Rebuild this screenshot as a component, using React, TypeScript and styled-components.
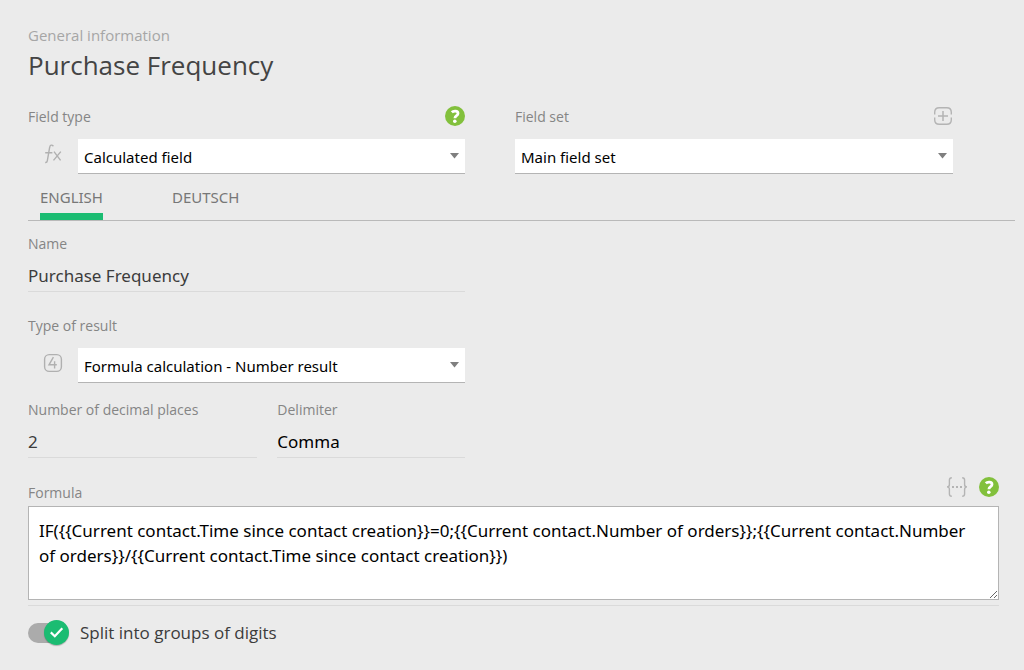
import React from "react";
import styled, { createGlobalStyle } from "styled-components";

const GlobalStyle = createGlobalStyle`
  *, *::before, *::after { box-sizing: border-box; }
  body {
    margin: 0;
    background: #ebebeb;
    color: #3c3c3c;
    font-family: "Segoe UI", "Open Sans", sans-serif;
  }
  button, input, select, textarea {
    font-family: "Segoe UI", "Noto Sans", sans-serif;
  }
`;

const Page = styled.main`
  padding: 23px 9px 22px 28px;
`;

const Eyebrow = styled.p`
  margin: 0;
  color: #a6a6a6;
  font-size: 15px;
  line-height: 24px;
`;

const Title = styled.h1`
  margin: 0 0 22px;
  color: #444;
  font-size: 26px;
  font-weight: 400;
  line-height: 36px;
`;

const Columns = styled.div`
  display: grid;
  grid-template-columns: 437fr 438fr;
  column-gap: 50px;
  padding-right: 62px;
`;

const SplitRow = styled.div`
  display: grid;
  grid-template-columns: 11fr 9fr;
  column-gap: 20px;
`;

const Field = styled.div<{ $gap?: number }>`
  margin-bottom: ${({ $gap = 0 }) => $gap}px;
`;

const FieldHead = styled.div`
  display: flex;
  align-items: flex-start;
  justify-content: space-between;
  height: 24px;
`;

const Label = styled.label`
  color: #858585;
  font-size: 14px;
  line-height: 24px;
`;

const HeadActions = styled.div`
  display: flex;
  gap: 11px;
`;

const IconButton = styled.button`
  display: flex;
  padding: 1px 0 0;
  border: 0;
  background: none;
  color: #b4b4b4;
  cursor: pointer;
`;

const SelectRow = styled.div`
  display: flex;
  margin-top: 10px;
`;

const TypeIcon = styled.span`
  display: flex;
  flex: none;
  justify-content: center;
  width: 50px;
  padding-top: 5px;
  color: #b0b0b0;
`;

const SelectBox = styled.div`
  position: relative;
  flex: 1;
  min-width: 0;
`;

const Select = styled.select`
  display: block;
  width: 100%;
  height: 35px;
  padding: 2px 28px 0 6px;
  border: 0;
  border-bottom: 1px solid #b4b4b4;
  border-radius: 0;
  background: #fff;
  color: #000;
  font-size: 15px;
  appearance: none;
`;

const Arrow = styled.svg`
  position: absolute;
  top: 14px;
  right: 6px;
  pointer-events: none;
`;

const Tabs = styled.div`
  display: flex;
  gap: 69px;
  height: 47px;
  margin-bottom: 11px;
  padding: 11px 12px 0;
  border-bottom: 1px solid #b9b9b9;
`;

const Tab = styled.button<{ $active?: boolean }>`
  padding: 0 0 4px;
  border: 0;
  border-bottom: 7px solid ${({ $active }) => ($active ? "#1bbc72" : "transparent")};
  background: none;
  color: #777;
  font-size: 15px;
  line-height: 24px;
  cursor: pointer;
`;

const LineInput = styled.input`
  display: block;
  width: 100%;
  height: 36px;
  padding: 4px 0 0;
  border: 0;
  border-bottom: 1px solid #dadada;
  background: none;
  color: #3c3c3c;
  font-size: 17px;
`;

const LineSelect = styled.select`
  display: block;
  width: 100%;
  height: 36px;
  padding: 4px 0 0;
  border: 0;
  border-bottom: 1px solid #dadada;
  border-radius: 0;
  background: none;
  color: #000;
  font-size: 17px;
  appearance: none;
`;

const FormulaField = styled.div`
  margin-right: 16px;
  padding-bottom: 5px;
  border-bottom: 1px solid #dadada;
`;

const FormulaHead = styled.div`
  display: flex;
  align-items: flex-start;
  justify-content: space-between;
  height: 30px;
`;

const FormulaLabel = styled(Label)`
  padding-top: 5px;
`;

const Formula = styled.textarea`
  display: block;
  width: 100%;
  height: 94px;
  padding: 11px 20px 8px 10px;
  border: 1px solid #b4b4b4;
  border-radius: 0;
  background: #fff;
  color: #000;
  font-size: 17px;
  line-height: 25px;
  resize: vertical;
`;

const ToggleLabel = styled.label`
  display: flex;
  align-items: center;
  gap: 11px;
  width: fit-content;
  margin-top: 13px;
  color: #3c3c3c;
  font-size: 17px;
  line-height: 28px;
  cursor: pointer;
`;

const Switch = styled.span`
  position: relative;
  display: flex;
  align-items: center;
  width: 41px;
  height: 28px;
`;

const SwitchInput = styled.input`
  width: 40px;
  height: 20px;
  margin: 0;
  border-radius: 10px;
  background: #ababab;
  appearance: none;
  cursor: pointer;

  & + svg { right: 15px; }
  &:checked + svg { right: 0; }
`;

const Knob = styled.svg`
  position: absolute;
  top: 1px;
  border-radius: 50%;
  background: #1bbc72;
  box-shadow: 0 1px 1px rgba(0, 0, 0, 0.25);
  pointer-events: none;
`;

const HelpIcon = () => (
  <svg width="20" height="20" viewBox="0 0 20 20" fill="none" aria-hidden="true">
    <circle cx="10" cy="10" r="10" fill="#82c03c" />
    <path d="M6.8 6.3C8.2 4.9 13 4.4 13 7.4C13 9.7 9.9 9.4 9.9 12.2" stroke="#fff" strokeWidth="2.8" />
    <circle cx="9.8" cy="15.2" r="1.8" fill="#fff" />
  </svg>
);

const AddIcon = () => (
  <svg width="20" height="20" viewBox="0 0 20 20" fill="none" stroke="currentColor" aria-hidden="true">
    <path d="M1.7 8.6V6.2Q1.7 1.7 6.2 1.7H13.8Q18.3 1.7 18.3 6.2V8.6M18.3 11.4V13.8Q18.3 18.3 13.8 18.3H6.2Q1.7 18.3 1.7 13.8V11.4" strokeWidth="1.4" />
    <path d="M10 5V15M5 10H15" strokeWidth="1.5" />
  </svg>
);

const FunctionIcon = () => (
  <svg width="20" height="20" viewBox="0 0 20 20" fill="none" stroke="currentColor" strokeWidth="1.4" aria-hidden="true">
    <path d="M10.4 2.2C8.8 0.2 7 1.1 6.6 3.6L4.3 16.9Q4 18.7 2.2 18.5M2.2 8.7H9.4" />
    <path d="M11 7.6L17.6 16.4M17.8 7.6L10.5 16.4" />
  </svg>
);

const NumberIcon = () => (
  <svg width="20" height="20" viewBox="0 0 20 20" fill="none" stroke="currentColor" strokeWidth="1.4" aria-hidden="true">
    <rect x="1.6" y="1.6" width="16.8" height="16.8" rx="4.6" />
    <path d="M10.4 4.2L6 11.8H13.8M11.6 8.2V15.6" />
  </svg>
);

const VariableIcon = () => (
  <svg width="22" height="20" viewBox="0 0 22 20" fill="none" stroke="currentColor" strokeWidth="1.4" aria-hidden="true">
    <path d="M5.8 0.8Q3.4 0.8 3.4 3V7.4Q3.4 9.9 1 9.9Q3.4 9.9 3.4 12.4V17Q3.4 19.2 5.8 19.2" />
    <path d="M16.2 0.8Q18.6 0.8 18.6 3V7.4Q18.6 9.9 21 9.9Q18.6 9.9 18.6 12.4V17Q18.6 19.2 16.2 19.2" />
    <path d="M6 10H8M10 10H12M14 10H16" strokeWidth="1.8" />
  </svg>
);

type DropdownProps = { id: string; value: string };

const Dropdown = ({ id, value }: DropdownProps) => (
  <SelectBox>
    <Select id={id} defaultValue={value}>
      <option>{value}</option>
    </Select>
    <Arrow width="9" height="6" viewBox="0 0 9 6" aria-hidden="true">
      <path d="M0 0H9L4.5 5.5Z" fill="#7f7f7f" />
    </Arrow>
  </SelectBox>
);

const FORMULA =
  "IF({{Current contact.Time since contact creation}}=0;{{Current contact.Number of orders}};{{Current contact.Number of orders}}/{{Current contact.Time since contact creation}})";

export default function App() {
  return (
    <>
      <GlobalStyle />
      <Page>
        <Eyebrow>General information</Eyebrow>
        <Title>Purchase Frequency</Title>

        <Columns>
          <Field>
            <FieldHead>
              <Label htmlFor="field-type">Field type</Label>
              <IconButton type="button" aria-label="Help on field types">
                <HelpIcon />
              </IconButton>
            </FieldHead>
            <SelectRow>
              <TypeIcon>
                <FunctionIcon />
              </TypeIcon>
              <Dropdown id="field-type" value="Calculated field" />
            </SelectRow>
          </Field>
          <Field>
            <FieldHead>
              <Label htmlFor="field-set">Field set</Label>
              <IconButton type="button" aria-label="Add field set">
                <AddIcon />
              </IconButton>
            </FieldHead>
            <SelectRow>
              <Dropdown id="field-set" value="Main field set" />
            </SelectRow>
          </Field>
        </Columns>

        <Tabs role="tablist">
          <Tab type="button" role="tab" aria-selected="true" $active>
            ENGLISH
          </Tab>
          <Tab type="button" role="tab" aria-selected="false">
            DEUTSCH
          </Tab>
        </Tabs>

        <Columns>
          <div>
            <Field $gap={22}>
              <FieldHead>
                <Label htmlFor="name">Name</Label>
              </FieldHead>
              <LineInput id="name" defaultValue="Purchase Frequency" />
            </Field>
            <Field $gap={15}>
              <FieldHead>
                <Label htmlFor="result-type">Type of result</Label>
              </FieldHead>
              <SelectRow>
                <TypeIcon>
                  <NumberIcon />
                </TypeIcon>
                <Dropdown id="result-type" value="Formula calculation - Number result" />
              </SelectRow>
            </Field>
            <SplitRow>
              <Field $gap={18}>
                <FieldHead>
                  <Label htmlFor="decimals">Number of decimal places</Label>
                </FieldHead>
                <LineInput id="decimals" inputMode="numeric" defaultValue="2" />
              </Field>
              <Field $gap={18}>
                <FieldHead>
                  <Label htmlFor="delimiter">Delimiter</Label>
                </FieldHead>
                <LineSelect id="delimiter" defaultValue="Comma">
                  <option>Comma</option>
                </LineSelect>
              </Field>
            </SplitRow>
          </div>
        </Columns>

        <FormulaField>
          <FormulaHead>
            <FormulaLabel htmlFor="formula">Formula</FormulaLabel>
            <HeadActions>
              <IconButton type="button" aria-label="Insert variable">
                <VariableIcon />
              </IconButton>
              <IconButton type="button" aria-label="Help on formulas">
                <HelpIcon />
              </IconButton>
            </HeadActions>
          </FormulaHead>
          <Formula id="formula" spellCheck={false} defaultValue={FORMULA} />
        </FormulaField>

        <ToggleLabel>
          <Switch>
            <SwitchInput type="checkbox" role="switch" defaultChecked />
            <Knob width="25" height="25" viewBox="0 0 25 25" fill="none" aria-hidden="true">
              <path d="M6.8 12.4L10.8 16.2L18.3 8.2" stroke="#fff" strokeWidth="2.2" />
            </Knob>
          </Switch>
          Split into groups of digits
        </ToggleLabel>
      </Page>
    </>
  );
}
